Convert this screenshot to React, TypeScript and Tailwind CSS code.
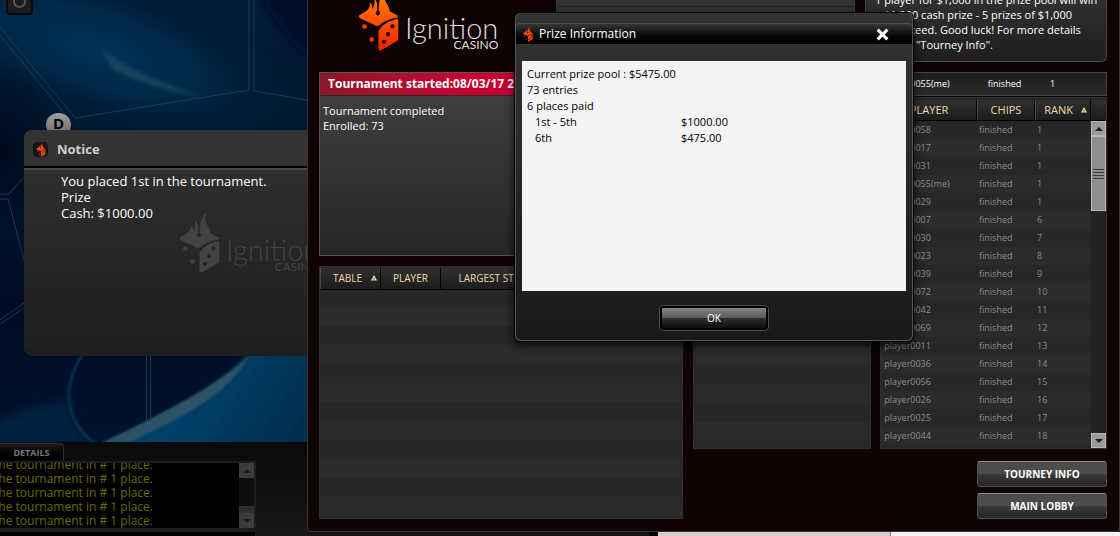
import React from "react";
import clsx from "clsx";

interface Player {
  name: string;
  rank: number;
}

const PLAYERS: Player[] = [
  { name: "player0058", rank: 1 },
  { name: "player0017", rank: 1 },
  { name: "player0031", rank: 1 },
  { name: "player0055(me)", rank: 1 },
  { name: "player0029", rank: 1 },
  { name: "player0007", rank: 6 },
  { name: "player0030", rank: 7 },
  { name: "player0023", rank: 8 },
  { name: "player0039", rank: 9 },
  { name: "player0072", rank: 10 },
  { name: "player0042", rank: 11 },
  { name: "player0069", rank: 12 },
  { name: "player0011", rank: 13 },
  { name: "player0036", rank: 14 },
  { name: "player0056", rank: 15 },
  { name: "player0026", rank: 16 },
  { name: "player0025", rank: 17 },
  { name: "player0044", rank: 18 },
];

const PRIZES = [
  { place: "1st - 5th", amount: "$1000.00" },
  { place: "6th", amount: "$475.00" },
];

const HEAD_CELL =
  "h-[21px] border-l border-l-[#4a4a4a] border-r border-r-black border-b border-b-black bg-linear-to-b from-[#303030] to-[#1c1c1c] p-0 font-normal whitespace-nowrap";

function DiceMark({ className }: { className?: string }) {
  return (
    <svg viewBox="0 0 40 62" className={className} aria-hidden="true">
      <defs>
        <linearGradient id="fire" gradientUnits="userSpaceOnUse" x1="0" y1="8" x2="0" y2="60">
          <stop offset="0" stopColor="#ff7a00" />
          <stop offset="1" stopColor="#ff1c00" />
        </linearGradient>
      </defs>
      <path d="M0 25.500C4 23 8.500 21 10 18C11 16 11 14 10.500 12C12.500 14 13.500 16 13.300 19C15.500 16 16 12 15 8C18 11 18.800 15 18 21A2.200 2.200 0 1 0 19.800 21C19 14 21 5 27 0C24 6 25.500 10 28 14C29.500 16.500 30.500 19 30.800 21.500L38.500 25.500C39.300 26.500 39 27.300 37.500 27.800C30 29 25 31.500 20 35.500C18.500 36.200 17 36 15.500 35L1.500 28.500C0 27.500 -0.500 26.500 0 25.500Z" />
      <path
        fillRule="evenodd"
        d="M20 40C24 34 30 31 38 29C39 29 39.300 29.500 39.300 30.500V48C39.300 50 38.700 50.700 37 51.500L22.500 60C20.500 61 19.500 60.500 19.500 58.500V42C19.500 41.200 19.600 40.600 20 40ZM33.500 34.300a2.100 2.100 0 1 0 0.010 0ZM29 42a2.100 2.100 0 1 0 0.010 0ZM25 49.700a2.100 2.100 0 1 0 0.010 0Z"
      />
      <circle cx="5.500" cy="36.500" r="2.300" />
      <circle cx="12.700" cy="49.500" r="2.300" />
    </svg>
  );
}

function Logo({ muted = false }: { muted?: boolean }) {
  return (
    <div className="flex items-end gap-[6px]">
      <DiceMark
        className={clsx("h-[62px] w-[40px] shrink-0", muted ? "fill-[#434343]" : "fill-[url(#fire)]")}
      />
      <div
        className={clsx(
          "flex flex-col items-end font-[Lato,sans-serif] font-light",
          muted ? "text-[#434343]" : "text-[#dedede]"
        )}
      >
        <span className="text-[29px] leading-[29px]">Ignition</span>
        <span className="-mt-1 text-[12px] leading-[14px] font-normal">CASINO</span>
      </div>
    </div>
  );
}

function SortMark() {
  return (
    <svg viewBox="0 0 6 6" className="h-[6px] w-[6px]" aria-hidden="true">
      <path d="M3 0L6 5.500H0Z" fill="#f0d9a8" />
      <path d="M3 3.200V4.400" stroke="#222" strokeWidth="1" />
    </svg>
  );
}

function Arrow({ down = false }: { down?: boolean }) {
  return (
    <svg viewBox="0 0 8 4" className={clsx("h-[4px] w-[8px]", down && "rotate-180")} aria-hidden="true">
      <path d="M4 0L8 4H0Z" fill="#1c1c1c" />
    </svg>
  );
}

function Felt() {
  return (
    <svg
      viewBox="0 0 307 442"
      preserveAspectRatio="xMinYMin slice"
      className="absolute inset-0 h-full w-full"
      aria-hidden="true"
    >
      <defs>
        <linearGradient id="sea" x1="0" y1="0" x2="0" y2="1">
          <stop offset="0" stopColor="#001a38" />
          <stop offset="0.300" stopColor="#001832" />
          <stop offset="0.700" stopColor="#000b25" />
          <stop offset="1" stopColor="#00122c" />
        </linearGradient>
        <radialGradient id="glow" gradientUnits="userSpaceOnUse" cx="0" cy="0" r="1" gradientTransform="translate(100 50) rotate(18) scale(210 75)">
          <stop offset="0" stopColor="#003357" />
          <stop offset="0.500" stopColor="#002747" />
          <stop offset="1" stopColor="#001a36" stopOpacity="0" />
        </radialGradient>
        <radialGradient id="deep" gradientUnits="userSpaceOnUse" cx="0" cy="0" r="1" gradientTransform="translate(0 150) scale(60 90)">
          <stop offset="0" stopColor="#00081a" />
          <stop offset="1" stopColor="#00081a" stopOpacity="0" />
        </radialGradient>
        <linearGradient id="wave" x1="0" y1="0.600" x2="1" y2="0.900">
          <stop offset="0" stopColor="#004a78" />
          <stop offset="1" stopColor="#002b4a" />
        </linearGradient>
        <filter id="soft" x="-20%" y="-20%" width="140%" height="140%">
          <feGaussianBlur stdDeviation="2" />
        </filter>
        <filter id="crisp" x="-20%" y="-20%" width="140%" height="140%">
          <feGaussianBlur stdDeviation="1" />
        </filter>
        <filter id="softer" x="-30%" y="-30%" width="160%" height="160%">
          <feGaussianBlur stdDeviation="5" />
        </filter>
      </defs>
      <rect width="307" height="442" fill="url(#sea)" />
      <rect width="307" height="200" fill="url(#glow)" />
      <rect width="120" height="300" fill="url(#deep)" />
      <path d="M262 -5H312V60C290 40 272 20 262 -5Z" fill="#000f2a" filter="url(#softer)" />
      <path d="M102 49C122 66 150 78 202 97C165 90 130 80 112 68Z" fill="#234a63" opacity="0.800" filter="url(#soft)" />
      <path d="M-10 425C30 405 50 405 68 400C72 425 82 436 100 446H-10Z" fill="#00213f" filter="url(#softer)" />
      <path d="M84 352C62 385 62 420 98 446" fill="none" stroke="#003f68" strokeWidth="2" filter="url(#crisp)" />
      <path d="M98 446C180 412 225 380 252 350H320V450H98Z" fill="url(#wave)" filter="url(#soft)" />
      <path d="M102 443C160 414 215 388 250 355C232 388 200 410 128 443Z" fill="#2c5268" filter="url(#crisp)" />
      <g fill="none" stroke="#1b3c55" strokeWidth="1">
        <path d="M0 27L75 118L249 90V0" />
        <path d="M0 35L68 118" />
        <path d="M254 0V91L307 100" />
        <path d="M0 194H9L24 177M0 199H8L24 260" />
        <path d="M0 320L24 303M0 324L24 308" />
        <path d="M146.500 355V420M150.500 355V418" />
      </g>
    </svg>
  );
}

function Notice() {
  return (
    <section className="absolute top-[130px] right-0 bottom-[86px] left-[24px] flex flex-col overflow-hidden rounded-l-lg bg-linear-to-b from-[#323232] to-[#1d1d1d]">
      <header className="flex h-[36px] shrink-0 items-center gap-[9px] bg-[#333333] pt-[3px] pl-[9px]">
        <span className="flex h-[15px] w-[15px] items-center justify-center rounded-sm bg-[#161616]">
          <DiceMark className="h-[14px] w-[10px] fill-[#ff4a10]" />
        </span>
        <h2 className="text-[13px] font-bold text-[#d0d0d0]">Notice</h2>
      </header>
      <div className="h-[4px] shrink-0 border-t-2 border-b-2 border-t-black border-b-[#484848]" />
      <p className="pt-[3px] pl-[37px] text-[13px] leading-[16px] text-white">
        You placed 1st in the tournament.
        <br />
        Prize
        <br />
        Cash: $1000.00
      </p>
      <div className="-mt-[9px] w-[140px] self-end">
        <div className="w-[160px] pl-[13px]">
          <Logo muted />
        </div>
      </div>
    </section>
  );
}

function ChatLog() {
  return (
    <div className="flex min-h-[94px] flex-1 flex-col bg-linear-to-b from-[#0a0a0a] to-[#161616]">
      <button className="mt-px h-[18px] w-[64px] rounded-tr-sm border-t border-r border-[#2c2c2c] bg-linear-to-b from-[#1c1c1c] to-black text-[9px] leading-[14px] font-bold text-[#777777]">
        DETAILS
      </button>
      <div className="flex h-[69px] w-[256px] border-t-2 border-r-2 border-b-2 border-[#1e1e1e] bg-black">
        <div className="flex w-[153px] flex-col items-end justify-end overflow-hidden text-[12px] leading-[14px] whitespace-nowrap text-[#6a6a00]">
          {[1, 2, 3, 4, 5].map((line) => (
            <p key={line}>he tournament in # 1 place.</p>
          ))}
        </div>
        <div className="ml-auto flex w-[15px] flex-col bg-[#0e0e0e]">
          <button aria-label="Scroll up" className="flex h-[15px] items-center justify-center bg-[#3c3c3c]">
            <Arrow />
          </button>
          <div className="mt-auto h-[7px] border border-[#333333] bg-[#2c2c2c]" />
          <button aria-label="Scroll down" className="flex h-[15px] items-center justify-center bg-[#3c3c3c]">
            <Arrow down />
          </button>
        </div>
      </div>
      <div className="mt-px w-[256px] flex-1 border-t border-r border-[#1e1e1e] bg-black" />
    </div>
  );
}

function GameTable() {
  return (
    <div className="flex w-[307px] shrink-0 flex-col overflow-hidden">
      <div className="relative h-[442px] overflow-hidden">
        <Felt />
        <div className="absolute -top-[12px] left-[6px] flex h-[27px] w-[27px] items-center justify-center rounded-sm border-2 border-[#0a0a0a] bg-[#1d1d1d]">
          <div className="h-[13px] w-[13px] rounded-full border-2 border-[#555555] border-t-transparent" />
        </div>
        <div className="absolute top-[113px] left-[46px] h-[24px] w-[25px] rounded-full bg-linear-to-b from-[#a0a0a0] to-[#666666] text-center text-[15px] leading-[21px] font-bold text-black">
          D
        </div>
        <Notice />
      </div>
      <ChatLog />
    </div>
  );
}

function StatusPanel() {
  return (
    <section className="h-[184px] shrink-0 border border-[#5a5658] bg-linear-to-b from-[#424242] to-[#262626]">
      <h2 className="h-[23px] overflow-hidden border-b border-[#2a2a2a] bg-linear-to-r from-[#8c1628] to-[#c80032] to-40% pl-[8px] text-[12px] leading-[22px] font-bold whitespace-nowrap text-white">
        Tournament started:08/03/17 20:05
      </h2>
      <p className="pt-[7px] pl-[3px] text-[11px] leading-[15px] text-white">
        Tournament completed
        <br />
        Enrolled: 73
      </p>
    </section>
  );
}

function TablesPanel() {
  return (
    <section className="flex-1 border border-[#2f2f2f] bg-[repeating-linear-gradient(#252827_0_19px,#2b2b2b_19px_38px)] [background-position:0_21px] pt-px">
      <table className="w-full table-fixed border-collapse text-[10px] text-[#f0d9a8]">
        <thead>
          <tr>
            <th className={clsx(HEAD_CELL, "w-[60px]")}>
              <span className="flex items-center justify-end gap-[9px] pr-[3px]">
                TABLE <SortMark />
              </span>
            </th>
            <th className={clsx(HEAD_CELL, "w-[60px]")}>PLAYER</th>
            <th className={clsx(HEAD_CELL, "w-[110px]")}>LARGEST STACK</th>
            <th className={HEAD_CELL}>SMALLEST STACK</th>
          </tr>
        </thead>
      </table>
    </section>
  );
}

function OwnRank() {
  return (
    <table className="w-full table-fixed border-separate border-spacing-0 border border-[#454545] bg-linear-to-b from-[#1d1d1d] to-[#2c2c2c] text-[9px] text-white">
      <tbody>
        <tr>
          <td className="h-[22px] py-0 pl-[3px]">player0055(me)</td>
          <td className="w-[57px] p-0 text-center">finished</td>
          <td className="w-[73px] p-0 pl-[17px]">1</td>
        </tr>
      </tbody>
    </table>
  );
}

function PlayersPanel() {
  return (
    <section className="flex flex-1 border border-[#2f2f2f] bg-[#252827] pt-[2px]">
      <table className="w-full flex-1 table-fixed self-start border-separate border-spacing-0 text-[9px] text-[#8c8c8c]">
        <thead className="text-[11px] text-[#f0d9a8]">
          <tr>
            <th className={HEAD_CELL}>PLAYER</th>
            <th className={clsx(HEAD_CELL, "w-[58px]")}>CHIPS</th>
            <th className={clsx(HEAD_CELL, "w-[56px]")}>
              <span className="flex items-center justify-end gap-[8px] pr-[3px]">
                RANK <SortMark />
              </span>
            </th>
          </tr>
        </thead>
        <tbody>
          {PLAYERS.map((player) => (
            <tr key={player.name} className="odd:bg-[#252827] even:bg-[#2b2b2b]">
              <td className="h-[18px] py-0 pr-0 pl-[3px]">{player.name}</td>
              <td className="py-0 pr-0 pl-[2px]">finished</td>
              <td className="py-0 pr-0 pl-[2px]">{player.rank}</td>
            </tr>
          ))}
        </tbody>
      </table>
      <div className="flex w-[15px] shrink-0 flex-col bg-[#232323]">
        <div className="h-[21px] border-b border-black bg-linear-to-b from-[#303030] to-[#1c1c1c]" />
        <button aria-label="Scroll up" className="flex h-[15px] items-center justify-center border border-[#b8b8b8] bg-[#9a9a9a]">
          <Arrow />
        </button>
        <div className="flex h-[75px] flex-col items-center justify-center gap-[2px] border border-[#b8b8b8] bg-[#8e8e8e]">
          {[1, 2, 3, 4].map((grip) => (
            <span key={grip} className="h-px w-[11px] bg-[#3a3a3a]" />
          ))}
        </div>
        <button aria-label="Scroll down" className="mt-auto flex h-[15px] items-center justify-center border border-[#b8b8b8] bg-[#9a9a9a]">
          <Arrow down />
        </button>
      </div>
    </section>
  );
}

function LobbyButton({ children }: { children: React.ReactNode }) {
  return (
    <button className="h-[26px] w-[130px] rounded-[3px] border border-[#505050] border-t-[#8a8a8a] bg-[linear-gradient(#4c4c4c_0_50%,#3a3a3a_50%,#262626)] text-[10px] font-bold text-white">
      {children}
    </button>
  );
}

function Lobby() {
  return (
    <main className="flex flex-1 flex-col rounded-b-sm border border-t-0 border-[#3a3434] bg-[#0f0304] pr-[12px] pb-[12px] pl-[11px]">
      <div className="flex h-[62px] items-start">
        <div className="-mt-[10px] w-[237px] shrink-0 pl-[40px]">
          <Logo />
        </div>
        <div className="h-full flex-1 border border-t-0 border-[#3a3a3a] bg-linear-to-b from-[#343434] to-[#262626]">
          <div className="h-[7px] border-b border-[#222222]" />
        </div>
        <div className="ml-[10px] h-full w-[242px] overflow-hidden rounded-b-md border border-t-0 border-[#4a4a4a] bg-linear-to-b from-[#303030] to-[#1e1e1e] pl-[9px]">
          <p className="-mt-[8px] text-[11px] leading-[15px] whitespace-nowrap text-white">
            1 player for $1,000 in the prize pool will win
            <br />
            a $1,000 cash prize - 5 prizes of $1,000
            <br />
            guaranteed. Good luck! For more details
            <br />
            click on "Tourney Info".
          </p>
        </div>
      </div>
      <div className="mt-[10px] grid flex-1 grid-cols-[364fr_415fr] gap-[10px]">
        <div className="flex flex-col gap-[10px]">
          <StatusPanel />
          <TablesPanel />
        </div>
        <div className="flex flex-col">
          <div className="grid flex-1 grid-cols-[179fr_227fr] gap-[9px]">
            <div className="border border-[#2f2f2f] bg-[repeating-linear-gradient(#252827_0_19px,#2b2b2b_19px_38px)] [background-position:0_26px]" />
            <div className="flex flex-col gap-px">
              <OwnRank />
              <PlayersPanel />
            </div>
          </div>
          <div className="mt-[12px] flex flex-col items-end gap-[6px]">
            <LobbyButton>TOURNEY INFO</LobbyButton>
            <LobbyButton>MAIN LOBBY</LobbyButton>
          </div>
        </div>
      </div>
    </main>
  );
}

function PrizeDialog() {
  return (
    <div
      role="dialog"
      aria-labelledby="prize-title"
      className="absolute top-[12px] left-[514px] w-[400px] rounded-md border border-black bg-linear-to-b from-[#323433] to-[#191919] shadow-[0_4px_10px_rgba(0,0,0,0.7)]"
    >
      <div className="rounded-md border border-t-0 border-[#555555] pt-[10px] pb-[9px]">
        <header className="flex h-[21px] items-center rounded-t-sm border-t border-[#505050] bg-linear-to-b from-[#363636] to-black pr-[23px] pl-[6px]">
          <DiceMark className="h-[15px] w-[12px] fill-[#ff4a10]" />
          <h2 id="prize-title" className="ml-[5px] text-[12px] leading-[16px] text-white">
            Prize Information
          </h2>
          <button aria-label="Close" className="ml-auto">
            <svg viewBox="0 0 12 12" className="h-[13px] w-[13px]" aria-hidden="true">
              <path d="M1.500 1.500L10.500 10.500M10.500 1.500L1.500 10.500" stroke="#fff" strokeWidth="2.800" />
            </svg>
          </button>
        </header>
        <div className="mx-[6px] mt-[17px] h-[230px] bg-[#f3f3f3] px-[5px] pt-[5px] text-[11px] leading-[16px] text-black">
          <p>Current prize pool : $5475.00</p>
          <p>73 entries</p>
          <p>6 places paid</p>
          <table className="border-collapse">
            <tbody>
              {PRIZES.map((prize) => (
                <tr key={prize.place}>
                  <td className="w-[154px] py-0 pr-0 pl-[8px]">{prize.place}</td>
                  <td className="p-0">{prize.amount}</td>
                </tr>
              ))}
            </tbody>
          </table>
        </div>
        <div className="mt-[14px] flex justify-center">
          <div className="rounded-sm border border-[#4c4c4c] bg-black p-[2px]">
            <button className="block h-[20px] w-[104px] bg-[linear-gradient(#868686,#5a5a5a_48%,#303030_50%,#0c0c0c)] text-[10px] text-white">
              OK
            </button>
          </div>
        </div>
      </div>
    </div>
  );
}

export default function App() {
  return (
    <div className="relative flex min-h-screen overflow-hidden bg-[#141414] font-['Open_Sans','Noto_Sans',sans-serif]">
      <GameTable />
      <div className="flex min-w-0 flex-1 flex-col">
        <Lobby />
        {/* windows peeking out behind the lobby */}
        <div className="flex h-[4px]">
          <div className="w-[342px] bg-[#141414]" />
          <div className="w-[9px] bg-black" />
          <div className="w-[233px] border-r border-[#777777] bg-[#d6d0d0]" />
          <div className="flex-1 bg-[#f4f2f2]" />
        </div>
      </div>
      <PrizeDialog />
    </div>
  );
}
